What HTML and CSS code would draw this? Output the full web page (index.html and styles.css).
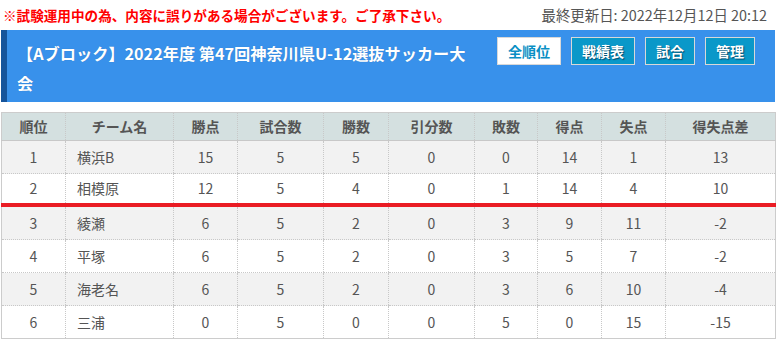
FILE: index.html
```html
<!DOCTYPE html>
<html lang="ja">
<head>
<meta charset="utf-8">
<link rel="stylesheet" href="styles.css">
</head>
<body>
<div class="page">
  <div class="topline">
    <p class="notice">※試験運用中の為、内容に誤りがある場合がございます。ご了承下さい。</p>
    <p class="updated">最終更新日: 2022年12月12日 20:12</p>
  </div>
  <div class="banner">
    <h1 class="title">【Aブロック】2022年度 第47回神奈川県U-12選抜サッカー大会</h1>
    <nav class="btns">
      <a class="btn btn-active">全順位</a>
      <a class="btn">戦績表</a>
      <a class="btn">試合</a>
      <a class="btn">管理</a>
    </nav>
  </div>
  <table class="standings">
    <colgroup>
      <col class="c1"><col class="c2"><col class="c3"><col class="c4"><col class="c5">
      <col class="c6"><col class="c7"><col class="c8"><col class="c9"><col class="c10">
    </colgroup>
    <thead>
      <tr><th>順位</th><th>チーム名</th><th>勝点</th><th>試合数</th><th>勝数</th><th>引分数</th><th>敗数</th><th>得点</th><th>失点</th><th>得失点差</th></tr>
    </thead>
    <tbody>
      <tr><td>1</td><td class="team">横浜B</td><td>15</td><td>5</td><td>5</td><td>0</td><td>0</td><td>14</td><td>1</td><td>13</td></tr>
      <tr class="cut"><td>2</td><td class="team">相模原</td><td>12</td><td>5</td><td>4</td><td>0</td><td>1</td><td>14</td><td>4</td><td>10</td></tr>
      <tr><td>3</td><td class="team">綾瀬</td><td>6</td><td>5</td><td>2</td><td>0</td><td>3</td><td>9</td><td>11</td><td>-2</td></tr>
      <tr><td>4</td><td class="team">平塚</td><td>6</td><td>5</td><td>2</td><td>0</td><td>3</td><td>5</td><td>7</td><td>-2</td></tr>
      <tr><td>5</td><td class="team">海老名</td><td>6</td><td>5</td><td>2</td><td>0</td><td>3</td><td>6</td><td>10</td><td>-4</td></tr>
      <tr><td>6</td><td class="team">三浦</td><td>0</td><td>5</td><td>0</td><td>0</td><td>5</td><td>0</td><td>15</td><td>-15</td></tr>
    </tbody>
  </table>
</div>
</body>
</html>
```
FILE: styles.css
```css
html, body {
  margin: 0;
  padding: 0;
  background: #fff;
}
body {
  font-family: "Noto Sans CJK JP", "Noto Sans", sans-serif;
  color: #555;
}
.page {
  padding: 0 2px 0 1px;
}
.topline {
  height: 30px;
  display: flex;
  align-items: center;
  justify-content: space-between;
  padding: 0 8px 0 2px;
}
.notice {
  margin: 0;
  color: #f00;
  font-weight: bold;
  font-size: 13.6px;
  line-height: 20px;
}
.updated {
  margin: 0;
  color: #555;
  font-size: 14.4px;
  line-height: 20px;
}
.banner {
  display: flex;
  align-items: flex-start;
  gap: 22px;
  background: #3891eb;
  border-left: 6px solid #15549b;
  padding: 7px 20px 4px 10px;
}
.title {
  flex: 1;
  margin: 0;
  padding-top: 1px;
  color: #fff;
  font-size: 16.2px;
  font-weight: bold;
  line-height: 30px;
  text-shadow: 0 0 1px rgba(0,0,0,0.2);
}
.btns {
  display: flex;
  gap: 10px;
}
.btn {
  display: block;
  height: 26px;
  line-height: 26px;
  padding: 0 10px;
  border: 1px solid #d8d8d8;
  background: #0a98c9;
  color: #fff;
  font-size: 14px;
  font-weight: bold;
  text-shadow: 1px 1px 1px rgba(0,40,70,0.7);
  white-space: nowrap;
}
.btn-active {
  background: #fff;
  color: #0a8fc4;
  text-shadow: none;
}
.standings {
  margin-top: 10px;
  width: 774px;
  table-layout: fixed;
  border-collapse: collapse;
  border: 1px solid #ccc;
  font-size: 14px;
  color: #555;
}
.c1 { width: 64px; }
.c2 { width: 108px; }
.c3 { width: 64px; }
.c4 { width: 86px; }
.c5 { width: 65px; }
.c6 { width: 86px; }
.c7 { width: 63px; }
.c8 { width: 64px; }
.c9 { width: 64px; }
.c10 { width: 110px; }
.standings th {
  background: #d4e0e0;
  font-weight: bold;
  height: 27px;
  line-height: 27px;
  padding: 0;
  border-left: 1px dotted #c8c8c8;
  border-bottom: 1px solid #c8c8c8;
  text-align: center;
}
.standings td {
  height: 32px;
  line-height: 32px;
  padding: 0;
  text-align: center;
  border-left: 1px dotted #c8c8c8;
  border-bottom: 1px dotted #c8c8c8;
}
.standings tbody tr:nth-child(odd) td {
  background: #f2f2f2;
}
.standings td.team {
  text-align: left;
  padding-left: 11px;
}
.standings tr.cut td {
  height: 29px;
  line-height: 29px;
  border-bottom: 4px solid #ea1c24;
}
```
